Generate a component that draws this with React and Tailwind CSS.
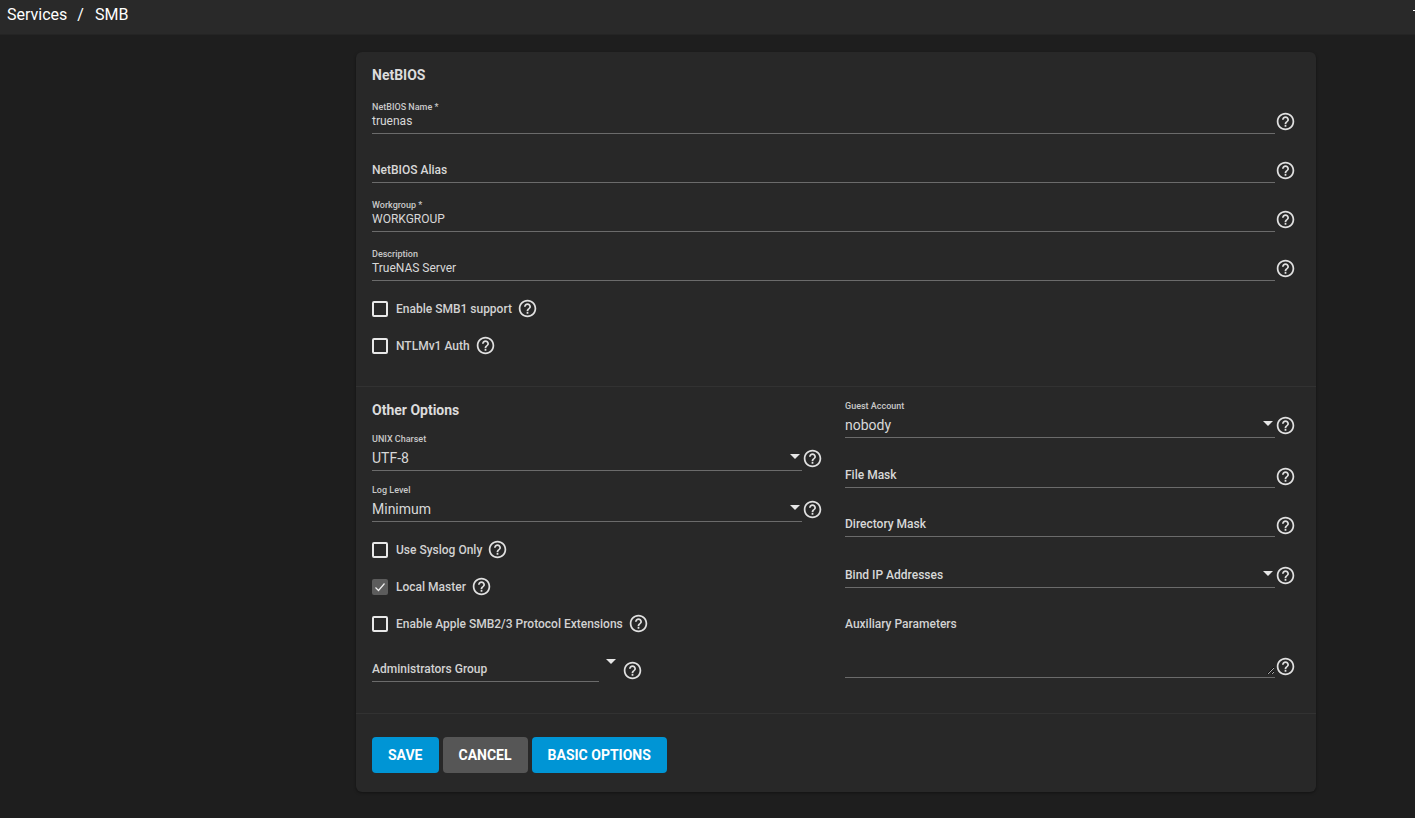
import React from "react";
import { MdHelpOutline } from "react-icons/md";

function Help({ className = "" }) {
  return <MdHelpOutline size={21} color="#e0e0e0" className={`shrink-0 ${className}`} />;
}

function Arrow({ className = "" }) {
  return <span className={`block w-0 h-0 border-x-[5.5px] border-x-transparent border-t-[5.5px] border-t-[#e6e6e6] ${className}`} />;
}

function Field({ h, label, value, select, small, iconMb = "mb-[2px]" }) {
  return (
    <div className={`flex items-end ${h}`}>
      <div className="relative flex-1 min-w-0 border-b border-[#6b6b6b] flex flex-col justify-end">
        {small && <div className="text-[9px] leading-[10px] font-medium text-[#c8c8c8]">{label}</div>}
        <div className={`${select && small ? "text-[14px] leading-[20px] mt-[4px] mb-[2px]" : "text-[12px] leading-[18px] mb-[3px]"} ${!small ? "font-medium" : ""} text-[#d8d8d8] h-auto`}>
          {small ? value : label}
        </div>
        {select && <Arrow className="absolute right-[2px] bottom-[11px]" />}
      </div>
      <Help className={iconMb} />
    </div>
  );
}

function Check({ label, checked }) {
  return (
    <div className="flex items-center h-[37px]">
      {checked ? (
        <span className="w-[16px] h-[16px] rounded-[2px] bg-[#5c5c5c] flex items-center justify-center">
          <svg width="12" height="12" viewBox="0 0 24 24" fill="none" stroke="#f0f0f0" strokeWidth="2.4">
            <path d="M3 13l6 6L21 5" />
          </svg>
        </span>
      ) : (
        <span className="w-[16px] h-[16px] rounded-[2px] border-2 border-[#e8e8e8]" />
      )}
      <span className="ml-[8px] text-[12px] font-medium text-[#d2d2d2]">{label}</span>
      <Help className="ml-[5px]" />
    </div>
  );
}

function Btn({ children, gray }) {
  return (
    <button className={`h-[36px] px-[16px] rounded-[4px] text-[14px] font-bold text-white ${gray ? "bg-[#565656]" : "bg-[#0095d5]"}`}>
      {children}
    </button>
  );
}

export default function App() {
  return (
    <div className="w-[1415px] h-[818px] overflow-hidden bg-[#1e1e1e] font-['Roboto',sans-serif]">
      <header className="h-[35px] bg-[#292929] border-b border-[#242424] flex items-start justify-between pl-[7px] pt-[5px]">
        <div className="flex text-[16px] leading-[19px] text-white">
          <span>Services</span>
          <span className="ml-[10px]">/</span>
          <span className="ml-[11px]">SMB</span>
        </div>
        <span className="mt-[5px] w-[2px] h-px bg-white" />
      </header>
      <div className="pl-[356px] pt-[17px]">
        <main className="w-[960px] h-[740px] bg-[#282828] rounded-[6px] shadow-[0_1px_3px_rgba(0,0,0,0.4)]">
          <section className="h-[335px] border-b border-[#323232] pl-[16px] pr-[20px] pt-[13px]">
            <h2 className="text-[14px] leading-[20px] font-bold text-[#dcdcdc]">NetBIOS</h2>
            <Field h="h-[49px]" small label="NetBIOS Name *" value="truenas" />
            <Field h="h-[49px]" label="NetBIOS Alias" />
            <Field h="h-[49px]" small label="Workgroup *" value="WORKGROUP" />
            <Field h="h-[49px]" small label="Description" value="TrueNAS Server" />
            <div className="mt-[9px]">
              <Check label="Enable SMB1 support" />
              <Check label="NTLMv1 Auth" />
            </div>
          </section>
          <section className="h-[327px] border-b border-[#323232] pl-[16px] pr-[20px] grid grid-cols-2 gap-x-[22px]">
            <div>
              <h2 className="pt-[13px] h-[34px] text-[14px] leading-[20px] font-bold text-[#dcdcdc]">Other Options</h2>
              <Field h="h-[50px]" small select label="UNIX Charset" value="UTF-8" />
              <Field h="h-[51px]" small select label="Log Level" value="Minimum" />
              <div className="mt-[9px]">
                <Check label="Use Syslog Only" />
                <Check label="Local Master" checked />
                <Check label="Enable Apple SMB2/3 Protocol Extensions" />
              </div>
              <div className="h-[40px] flex items-end">
                <div className="relative w-[227px] border-b border-[#6b6b6b] text-[12px] leading-[18px] font-medium text-[#d2d2d2] pb-[3px]">
                  Administrators Group
                  <Arrow className="absolute left-[234px] bottom-[17px]" />
                </div>
                <Help className="ml-[23px] mb-[1px]" />
              </div>
            </div>
            <div>
              <Field h="h-[51px]" small select label="Guest Account" value="nobody" />
              <Field h="h-[50px]" label="File Mask" iconMb="mb-[1px]" />
              <Field h="h-[49px]" label="Directory Mask" iconMb="mb-[1px]" />
              <Field h="h-[51px]" select label="Bind IP Addresses" />
              <div className="h-[90px] flex items-end">
                <div className="flex-1 border-b border-[#6b6b6b] h-[63px] flex flex-col">
                  <div className="text-[12px] leading-[18px] font-medium text-[#d2d2d2]">Auxiliary Parameters</div>
                  <textarea className="mt-auto mb-[2px] h-[30px] w-full bg-transparent outline-none [color-scheme:dark]" aria-label="Auxiliary Parameters" />
                </div>
                <Help className="mb-[1px]" />
              </div>
            </div>
          </section>
          <footer className="pl-[16px] pt-[23px] flex gap-[4px]">
            <Btn>SAVE</Btn>
            <Btn gray>CANCEL</Btn>
            <Btn>BASIC OPTIONS</Btn>
          </footer>
        </main>
      </div>
    </div>
  );
}
